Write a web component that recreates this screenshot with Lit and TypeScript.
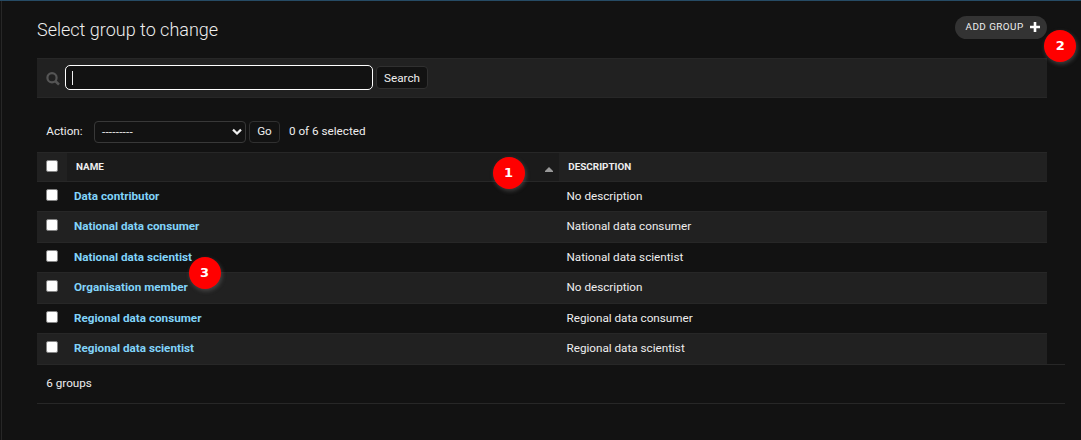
import { LitElement, html, css } from "lit";
import { customElement } from "lit/decorators.js";

const GROUPS: [string, string][] = [
  ["Data contributor", "No description"],
  ["National data consumer", "National data consumer"],
  ["National data scientist", "National data scientist"],
  ["Organisation member", "No description"],
  ["Regional data consumer", "Regional data consumer"],
  ["Regional data scientist", "Regional data scientist"],
];

@customElement("app-root")
export class AppRoot extends LitElement {
  static styles = css`
    :host {
      display: block;
      position: relative;
      box-sizing: border-box;
      height: 440px;
      overflow: hidden;
      background: #121212;
      color: #eee;
      border-top: 1px solid #264b65;
      font: 11.7px/16px Roboto, sans-serif;
      white-space: nowrap;
    }
    * { box-sizing: border-box; }
    .page {
      margin-left: 1px;
      height: 439px;
      border-left: 1px solid #272727;
      padding: 0 16px 0 35px;
    }
    .content { width: 1010px; }
    .head {
      height: 57px;
      display: flex;
      justify-content: space-between;
      align-items: flex-start;
    }
    h1 {
      margin: 17px 0 0;
      font-size: 18px;
      line-height: 24px;
      font-weight: 300;
    }
    .add {
      margin-top: 15px;
      height: 23px;
      width: 92px;
      padding: 0 7px 0 10.5px;
      border-radius: 12px;
      background: #333;
      display: flex;
      align-items: center;
      justify-content: space-between;
      font-size: 9.9px;
      letter-spacing: 0.45px;
      line-height: 20px;
    }
    .add span { padding-bottom: 2px; }
    .add svg, .lens svg { display: block; }
    .add svg { margin-top: -1px; }
    .search {
      height: 40px;
      background: #212121;
      border-top: 1px solid #272727;
      border-bottom: 1px solid #272727;
      display: flex;
      align-items: center;
      padding-left: 9px;
    }
    .lens { width: 19px; padding-top: 1px; }
    .field {
      width: 308px;
      height: 25px;
      margin-top: -1px;
      border: 1px solid #fff;
      border-radius: 5px;
      background: #121212;
      padding: 5px 6px;
    }
    .caret { width: 1px; height: 14px; background: #eee; }
    .btn {
      border: 1px solid #303030;
      border-radius: 4px;
      background: #121212;
      height: 22px;
      line-height: 18px;
      text-align: center;
    }
    .btn.find { width: 52px; height: 23px; line-height: 22px; margin: -1px 0 0 3px; }
    .actions {
      height: 54px;
      display: flex;
      align-items: center;
      padding: 13px 0 0 9.3px;
    }
    .label, .count { padding-bottom: 2px; }
    .label { width: 47.7px; }
    .select {
      width: 152px;
      height: 22px;
      border: 1px solid #383838;
      border-radius: 4px;
      display: flex;
      align-items: center;
      justify-content: space-between;
      padding: 0 3px 0 7px;
    }
    .blank { letter-spacing: 0.2px; }
    .btn.go { width: 31px; margin: 0 9px 0 3px; }
    .row {
      display: grid;
      grid-template-columns: 30px 492px 488px;
      height: 30px;
      border-bottom: 1px solid #272727;
      line-height: 29px;
    }
    .row.alt { height: 31px; background: #212121; }
    .row.last { border-bottom: 0; height: 30px; }
    .row.header {
      border-top: 1px solid #272727;
      background: #212121;
      font-size: 9.9px;
      font-weight: 700;
      line-height: 28px;
      height: 30px;
    }
    .check {
      width: 12px;
      height: 12px;
      margin: 7px 0 0 9px;
      background: #fff;
      border: 1px solid #858585;
      border-radius: 2px;
    }
    .name { padding-left: 7px; color: #81d4fa; font-weight: 700; }
    .desc { padding-left: 7.5px; }
    .sorted {
      background: #1b1b1b;
      display: flex;
      justify-content: space-between;
      align-items: center;
      padding: 0 6.5px 0 9px;
    }
    .sorted svg { margin-top: 4px; }
    .title { padding-left: 9.3px; }
    .footer {
      width: 1028px;
      height: 40px;
      border-top: 1px solid #272727;
      border-bottom: 1px solid #272727;
      padding-left: 9.3px;
      line-height: 37px;
    }
    .pin {
      position: absolute;
      width: 32px;
      height: 32px;
      border-radius: 50%;
      background: #f00;
      color: #fff;
      font: 700 13px/32px "DejaVu Sans", sans-serif;
      text-align: center;
      box-shadow: 1px 2px 4px rgba(120, 120, 120, 0.45);
    }
    .p1 { left: 492.5px; top: 156.4px; }
    .p2 { left: 1044.4px; top: 29.4px; }
    .p3 { left: 188.6px; top: 256.4px; }
  `;

  render() {
    return html`
      <div class="page">
        <div class="content">
          <div class="head">
            <h1>Select group to change</h1>
            <div class="add">
              <span>ADD GROUP</span>
              <svg width="10" height="10" viewBox="0 0 10 10"><path d="M5 0V10M0 5H10" stroke="#fff" stroke-width="2.6" /></svg>
            </div>
          </div>
          <div class="search">
            <div class="lens">
              <svg width="14" height="14" viewBox="0 0 14 14" fill="none" stroke="#555">
                <circle cx="6" cy="5.7" r="4.6" stroke-width="2.2" />
                <path d="M9.3 9L13 12.7" stroke-width="2.6" />
              </svg>
            </div>
            <div class="field"><div class="caret"></div></div>
            <div class="btn find">Search</div>
          </div>
          <div class="actions">
            <span class="label">Action:</span>
            <div class="select">
              <span class="blank">---------</span>
              <svg width="10" height="7" viewBox="0 0 10 7"><path d="M1 1.6L5 5.5L9 1.6" fill="none" stroke="#eee" stroke-width="2.2" /></svg>
            </div>
            <div class="btn go">Go</div>
            <span class="count">0 of 6 selected</span>
          </div>
          <div class="row header">
            <div class="check"></div>
            <div class="sorted">
              <span>NAME</span>
              <svg width="8" height="5" viewBox="0 0 8 5"><path d="M0 5V4L4 0L8 4V5Z" fill="#999" /></svg>
            </div>
            <div class="title">DESCRIPTION</div>
          </div>
          ${GROUPS.map(
            ([name, desc], i) => html`
              <div class="row ${i % 2 ? "alt" : ""} ${i === GROUPS.length - 1 ? "last" : ""}">
                <div class="check"></div>
                <div class="name">${name}</div>
                <div class="desc">${desc}</div>
              </div>
            `
          )}
        </div>
        <div class="footer">6 groups</div>
      </div>
      <div class="pin p1">1</div>
      <div class="pin p2">2</div>
      <div class="pin p3">3</div>
    `;
  }
}
